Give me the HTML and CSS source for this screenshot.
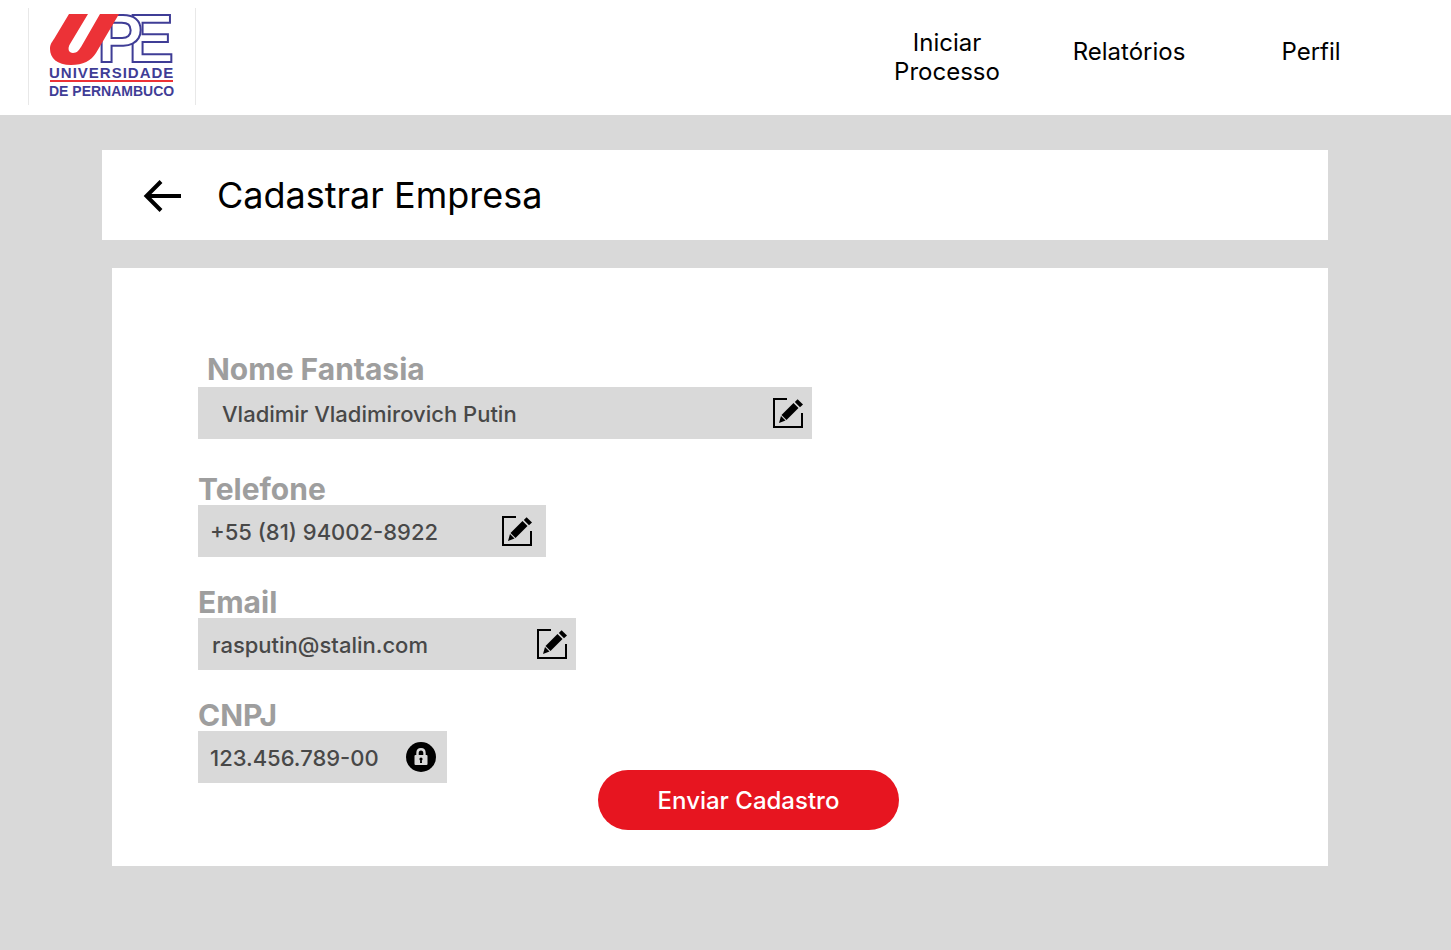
FILE: index.html
```html
<!DOCTYPE html>
<html lang="pt-BR">
<head>
<meta charset="utf-8">
<meta name="viewport" content="width=device-width, initial-scale=1">
<title>Cadastrar Empresa</title>
<link rel="stylesheet" href="styles.css">
</head>
<body>
<svg class="sprite" aria-hidden="true">
  <symbol id="icon-edit" viewBox="0 0 30 30">
    <path d="M14 1H1V29H29V15" fill="none" stroke="currentColor" stroke-width="2"/>
    <path d="M8.500 17L20.500 5L25.500 10L13.500 22Z"/>
    <path d="M21.800 4L24.600 1.300L30 6.500L27 9.200Z"/>
    <path d="M8 18L12.500 22.500L6 25Z"/>
  </symbol>
</svg>
<header class="topbar">
  <a class="brand" href="#" aria-label="Universidade de Pernambuco">
    <svg class="logo" viewBox="0 0 124 90" aria-hidden="true">
      <text class="logo-letter" x="78" y="51">E</text>
      <text class="logo-letter" x="47" y="51">P</text>
      <path class="logo-swoosh" d="M19 3H38L20 33C17 38 19 42 23 42C27 42 29 39 31 36L50 3H69L46 42C41 50 33 54 21 54C7 54 0 47 0 38C0 33 2 31 4 28Z"/>
      <text class="logo-name logo-name-wide" x="-1" y="67">UNIVERSIDADE</text>
      <path class="logo-rule" d="M0 70H123"/>
      <text class="logo-name" x="-1" y="85">DE PERNAMBUCO</text>
    </svg>
  </a>
  <nav class="menu">
    <a class="menu-tall" href="#">Iniciar Processo</a>
    <a href="#">Relatórios</a>
    <a href="#">Perfil</a>
  </nav>
</header>
<main class="page">
  <div class="heading">
    <button class="icon-button" type="button" aria-label="Voltar">
      <svg class="icon-back" viewBox="0 0 38 32" aria-hidden="true"><path d="M3 17H38M18 2.500L3.500 17L18 31.500"/></svg>
    </button>
    <h1>Cadastrar Empresa</h1>
  </div>
  <form class="card">
    <div class="field field-name">
      <label for="nome">Nome Fantasia</label>
      <div class="box">
        <input id="nome" type="text" value="Vladimir Vladimirovich Putin">
        <button class="icon-button" type="button" aria-label="Editar nome fantasia"><svg class="icon"><use href="#icon-edit"/></svg></button>
      </div>
    </div>
    <div class="field field-phone">
      <label for="telefone">Telefone</label>
      <div class="box">
        <input id="telefone" type="tel" value="+55 (81) 94002-8922">
        <button class="icon-button" type="button" aria-label="Editar telefone"><svg class="icon"><use href="#icon-edit"/></svg></button>
      </div>
    </div>
    <div class="field field-email">
      <label for="email">Email</label>
      <div class="box">
        <input id="email" type="email" value="rasputin@stalin.com">
        <button class="icon-button" type="button" aria-label="Editar email"><svg class="icon"><use href="#icon-edit"/></svg></button>
      </div>
    </div>
    <div class="last-row">
      <div class="field field-cnpj">
        <label for="cnpj">CNPJ</label>
        <div class="box">
          <input id="cnpj" type="text" value="123.456.789-00" readonly>
          <svg class="icon" viewBox="0 0 30 30" aria-hidden="true">
            <circle cx="15" cy="15" r="15"/>
            <path d="M11.500 14V11Q11.500 7.200 15 7.200T18.500 11V14" fill="none" stroke="#d9d9d9" stroke-width="2.400"/>
            <rect x="8.500" y="13" width="13" height="10" rx="1" fill="#d9d9d9"/>
            <circle cx="15" cy="17" r="1.600"/>
            <path d="M14.300 17H15.700L16 21H14Z"/>
          </svg>
        </div>
      </div>
      <button class="submit" type="submit">Enviar Cadastro</button>
    </div>
  </form>
</main>
</body>
</html>
```
FILE: styles.css
```css
* {
  box-sizing: border-box;
}

body {
  margin: 0;
  background: #d9d9d9;
  color: #000;
  font-family: Inter, "Liberation Sans", sans-serif;
}

.sprite {
  display: none;
}

.topbar {
  display: flex;
  align-items: center;
  justify-content: space-between;
  min-height: 115px;
  padding: 8px 79px 10px 28px;
  background: #fff;
}

.brand {
  padding: 3px 21px 4px;
  border: solid #e8e8e8;
  border-width: 0 1px;
}

.logo {
  display: block;
  width: 124px;
  height: 90px;
  overflow: visible;
}

.logo-letter {
  fill: #fff;
  stroke: #3f3d96;
  stroke-width: 2px;
  font: bold 69px "Liberation Sans", sans-serif;
}

.logo-swoosh {
  fill: #ec3237;
}

.logo-name {
  fill: #3f3d96;
  font: bold 14px "Liberation Sans", sans-serif;
}

.logo-name-wide {
  letter-spacing: 1px;
  font-size: 15px;
}

.logo-rule {
  stroke: #ec3237;
  stroke-width: 2px;
}

.menu {
  display: flex;
  align-items: flex-start;
  gap: 60px;
}

.menu a {
  width: 122px;
  padding-top: 9px;
  color: inherit;
  font-size: 24px;
  line-height: 29px;
  text-align: center;
  text-decoration: none;
}

.menu .menu-tall {
  padding-top: 0;
}

.page {
  padding: 35px 123px 84px 102px;
}

.heading {
  display: flex;
  align-items: center;
  gap: 36px;
  min-height: 90px;
  padding: 0 41px;
  background: #fff;
}

h1 {
  margin: 0;
  font-size: 36px;
  font-weight: 400;
  line-height: 44px;
}

.icon-button {
  padding: 0;
  border: 0;
  background: none;
  color: inherit;
  cursor: pointer;
}

.icon-back {
  display: block;
  width: 38px;
  height: 32px;
  overflow: visible;
  fill: none;
  stroke: #000;
  stroke-width: 4px;
}

.card {
  display: flex;
  flex-direction: column;
  gap: 29px;
  margin: 28px 0 0 10px;
  padding: 85px 86px 36px;
  background: #fff;
}

.field {
  max-width: 100%;
}

.field label {
  display: block;
  color: #9e9e9e;
  font-size: 30px;
  font-weight: 700;
  line-height: 32px;
}

.box {
  display: flex;
  align-items: center;
  height: 52px;
  padding: 0 9px 0 12px;
  background: #d9d9d9;
}

.box input {
  flex: 1;
  min-width: 0;
  padding: 2px 0 0;
  border: 0;
  background: none;
  color: #484848;
  font: 500 22px/28px Inter, "Liberation Sans", sans-serif;
}

.icon {
  display: block;
  flex: none;
  width: 30px;
  height: 30px;
}

.field-name {
  width: 614px;
  margin-bottom: 5px;
}

.field-name label {
  padding: 0 0 2px 9px;
}

.field-name .box {
  padding-left: 24px;
}

.field-phone {
  width: 348px;
}

.field-phone .box {
  padding-right: 14px;
}

.field-email {
  width: 378px;
}

.field-email .box {
  padding-left: 14px;
}

.field-cnpj {
  width: 249px;
}

.field-cnpj .box {
  padding-right: 11px;
}

.last-row {
  display: flex;
  flex-wrap: wrap;
  align-items: flex-start;
  column-gap: 151px;
}

.submit {
  width: 301px;
  height: 60px;
  margin-top: 71px;
  border: 0;
  border-radius: 30px;
  background: #e71520;
  color: #fff;
  font: 500 24px/29px Inter, "Liberation Sans", sans-serif;
  cursor: pointer;
}
```
